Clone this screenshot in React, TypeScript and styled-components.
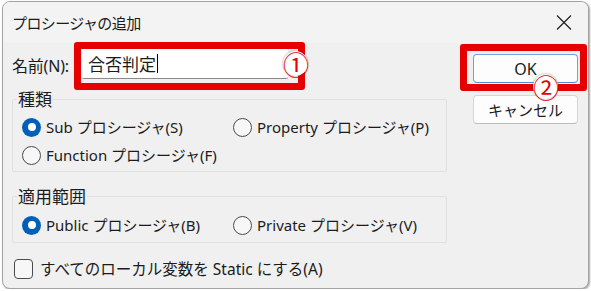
import styled, { createGlobalStyle } from 'styled-components';

const GlobalStyle = createGlobalStyle`
  html, body { margin: 0; padding: 0; background: #ffffff; }
  body {
    font-family: "Noto Sans", "Noto Sans CJK JP", sans-serif;
    color: #1b1b1b;
  }
`;

const Window = styled.div`
  box-sizing: border-box;
  width: 587px;
  height: 288px;
  margin: 1px 0 0 2px;
  border: 1px solid #a3a3a3;
  border-radius: 8px;
  background: #f0f0f0;
  overflow: hidden;
  box-shadow: 1px 1px 2px rgba(0, 0, 0, 0.35);
  display: flex;
  flex-direction: column;
`;

const TitleBar = styled.div`
  height: 41px;
  flex: none;
  display: flex;
  align-items: center;
  justify-content: space-between;
  padding: 0 16px 0 9px;
  background: #f3f3f3;
`;

const Title = styled.span`
  font-family: "Noto Sans CJK JP", sans-serif;
  font-size: 15px;
  letter-spacing: -0.6px;
  line-height: 18px;
`;

const Main = styled.div`
  flex: 1;
  display: flex;
  gap: 13px;
  padding: 0 1px 0 9px;
`;

const LeftColumn = styled.div`
  width: 435px;
  display: flex;
  flex-direction: column;
`;

const NameRow = styled.div`
  display: flex;
  align-items: center;
  height: 48px;
  margin-top: -1px;
`;

const Label = styled.span`
  width: 62px;
  font-size: 16px;
  line-height: 20px;
  letter-spacing: -0.2px;
  white-space: nowrap;
`;

/* red annotation frames */
const Highlight = styled.div<{ $w: number; $h: number }>`
  position: relative;
  box-sizing: border-box;
  width: ${p => p.$w}px;
  height: ${p => p.$h}px;
  border: 7px solid #e60000;
  border-radius: 3px;
`;

const NameHighlight = styled(Highlight)`
  padding: 0 0 0 1px;
`;

const TextBox = styled.div`
  box-sizing: border-box;
  width: 206px;
  height: 30px;
  background: #ffffff;
  border-bottom: 1px solid #8a8a8a;
  border-radius: 2px;
  padding-left: 6px;
  display: flex;
  align-items: center;
  font-family: "Noto Sans CJK JP", sans-serif;
  font-size: 17px;
  line-height: 22px;
`;

const Caret = styled.span`
  display: inline-block;
  width: 1px;
  height: 19px;
  background: #000;
  margin-left: 1px;
`;

const Badge = styled.span<{ $left: number; $top: number }>`
  position: absolute;
  left: ${p => p.$left}px;
  top: ${p => p.$top}px;
  width: 25px;
  height: 25px;
  border-radius: 50%;
  background: #ffffff;
  box-shadow: 0 0 2px rgba(0, 0, 0, 0.45);
  color: #e60000;
  font-family: "Noto Sans CJK JP", sans-serif;
  font-size: 26px;
  line-height: 25px;
  text-align: center;
`;

const Group = styled.fieldset<{ $mt: number; $pt: number; $pb: number }>`
  box-sizing: border-box;
  width: 435px;
  margin: ${p => p.$mt}px 0 0 0;
  padding: ${p => p.$pt}px 0 ${p => p.$pb}px 9px;
  border: 1px solid #e0e0e0;
  border-radius: 2px;
  min-width: 0;
`;

const Legend = styled.legend`
  margin-left: -5px;
  padding: 0 1px;
  font-family: "Noto Sans CJK JP", sans-serif;
  font-size: 17px;
  line-height: 18px;
`;

const OptionGrid = styled.div`
  display: grid;
  grid-template-columns: 211px auto;
  grid-auto-rows: 28px;
`;

const Option = styled.label`
  display: flex;
  align-items: center;
  gap: 5px;
  font-size: 15px;
  line-height: 20px;
  white-space: nowrap;
`;

const Radio = styled.span<{ $checked?: boolean }>`
  box-sizing: border-box;
  width: 19px;
  height: 19px;
  border-radius: 50%;
  flex: none;
  display: flex;
  align-items: center;
  justify-content: center;
  border: ${p => (p.$checked ? 'none' : '1px solid #4a4a4a')};
  background: ${p => (p.$checked ? '#005fb8' : '#f7f7f7')};

  &::after {
    content: '';
    display: ${p => (p.$checked ? 'block' : 'none')};
    width: 8px;
    height: 8px;
    border-radius: 50%;
    background: #ffffff;
  }
`;

const CheckRow = styled(Option)`
  height: 28px;
  margin-top: 12px;
  padding-left: 2px;
  gap: 7px;
  font-size: 15.5px;
`;

const CheckBox = styled.span`
  box-sizing: border-box;
  width: 19px;
  height: 20px;
  flex: none;
  border: 1px solid #4a4a4a;
  border-radius: 4px;
  background: #f7f7f7;
`;

const RightColumn = styled.div`
  display: flex;
  flex-direction: column;
`;

const OkHighlight = styled(Highlight)`
  margin-top: 1px;
  padding: 3px 0 0 6px;
`;

const Button = styled.button<{ $primary?: boolean }>`
  box-sizing: border-box;
  width: 105px;
  height: 29px;
  margin: 0;
  padding: 0;
  background: #fdfdfd;
  border: 1px solid ${p => (p.$primary ? '#6fa3da' : '#d6d6d6')};
  border-bottom-color: ${p => (p.$primary ? '#4f8fd3' : '#bcbcbc')};
  border-radius: 4px;
  color: #1b1b1b;
  font-family: "Noto Sans", "Noto Sans CJK JP", sans-serif;
  font-size: ${p => (p.$primary ? 16 : 15)}px;
  line-height: 20px;
`;

const CancelButton = styled(Button)`
  margin: 4px 0 0 13px;
`;

const CloseIcon = () => (
  <svg width="16" height="15" viewBox="0 0 16 15" fill="none">
    <path d="M1 0.5 L15 14.5 M15 0.5 L1 14.5" stroke="#1b1b1b" strokeWidth="1.1" />
  </svg>
);

export default function App() {
  return (
    <>
      <GlobalStyle />
      <Window>
        <TitleBar>
          <Title>プロシージャの追加</Title>
          <CloseIcon />
        </TitleBar>
        <Main>
          <LeftColumn>
            <NameRow>
              <Label>名前(N):</Label>
              <NameHighlight $w={231} $h={48}>
                <TextBox>
                  合否判定<Caret />
                </TextBox>
                <Badge $left={202} $top={2}>①</Badge>
              </NameHighlight>
            </NameRow>

            <Group $mt={0} $pt={5} $pb={2}>
              <Legend>種類</Legend>
              <OptionGrid>
                <Option><Radio $checked />Sub プロシージャ(S)</Option>
                <Option><Radio />Property プロシージャ(P)</Option>
                <Option><Radio />Function プロシージャ(F)</Option>
              </OptionGrid>
            </Group>

            <Group $mt={15} $pt={6} $pb={3}>
              <Legend>適用範囲</Legend>
              <OptionGrid>
                <Option><Radio $checked />Public プロシージャ(B)</Option>
                <Option><Radio />Private プロシージャ(V)</Option>
              </OptionGrid>
            </Group>

            <CheckRow><CheckBox />すべてのローカル変数を Static にする(A)</CheckRow>
          </LeftColumn>

          <RightColumn>
            <OkHighlight $w={127} $h={47}>
              <Button $primary>OK</Button>
              <Badge $left={66} $top={23}>②</Badge>
            </OkHighlight>
            <CancelButton>キャンセル</CancelButton>
          </RightColumn>
        </Main>
      </Window>
    </>
  );
}
